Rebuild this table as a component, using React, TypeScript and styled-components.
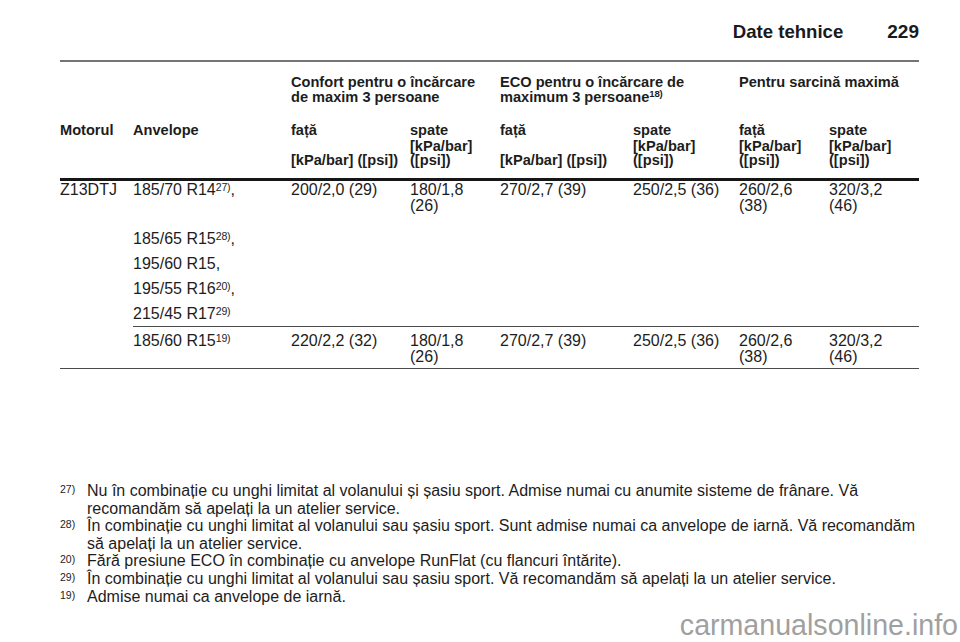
import React from "react";
import styled, { createGlobalStyle } from "styled-components";

const GlobalStyle = createGlobalStyle`
  html, body {
    margin: 0;
    padding: 0;
    background: #ffffff;
  }
  body {
    font-family: "Liberation Sans", Arial, Helvetica, sans-serif;
    color: #1d1d1d;
    width: 960px;
    height: 642px;
    overflow: hidden;
  }
`;

const COLS = "73px 158px 119px 90px 133px 106px 90px 90px";

const Page = styled.div`
  position: relative;
  width: 960px;
  height: 642px;
  padding: 0 41px 0 60px;
  box-sizing: border-box;
`;

const TitleBar = styled.header`
  height: 62px;
  display: flex;
  justify-content: flex-end;
  align-items: center;
  gap: 44px;
  padding-top: 4px;
  box-sizing: border-box;
  border-bottom: 2px solid #747474;
  font-weight: bold;
  font-size: 18.6px;
  color: #1a1a1a;
`;

const PageNo = styled.span`
  font-size: 19px;
`;

const HeadGrid = styled.div`
  display: grid;
  grid-template-columns: ${COLS};
  padding-bottom: 10.5px;
  border-bottom: 3px solid #161616;
  font-weight: bold;
  font-size: 14.6px;
  line-height: 14.5px;
`;

const GroupHead = styled.div<{ $start?: number }>`
  grid-column: ${(p) => (p.$start ? `${p.$start} / span 2` : "span 2")};
  padding-top: 13px;
  white-space: nowrap;
`;

const ColHead = styled.div`
  padding-top: 19px;
  white-space: nowrap;
`;

const UnitHead = styled.div<{ $start?: number }>`
  ${(p) => (p.$start ? `grid-column: ${p.$start};` : "")}
  align-self: end;
  padding-top: 1px;
  white-space: nowrap;
`;

const BodyGrid = styled.div`
  display: grid;
  grid-template-columns: ${COLS};
  border-bottom: 1px solid #4a4a4a;
  font-size: 16px;
  line-height: 15.5px;
`;

type RowKind = "first" | "list" | "last";

const PAD: Record<RowKind, string> = {
  first: "1px 0 13px",
  list: "5px 0 4.5px",
  last: "6px 0 4px",
};

const Cell = styled.div<{ $col?: number; $row: RowKind }>`
  ${(p) => (p.$col ? `grid-column: ${p.$col};` : "")}
  padding: ${(p) => PAD[p.$row]};
  white-space: nowrap;
  border-top: ${(p) => (p.$row === "last" ? "1px solid #4a4a4a" : "none")};
`;

const Sup = styled.sup`
  font-size: 0.66em;
  line-height: 0;
  vertical-align: baseline;
  position: relative;
  top: -0.42em;
  letter-spacing: -0.2px;
`;

const Notes = styled.ol`
  list-style: none;
  margin: 113px 0 0;
  padding: 0;
  font-size: 16px;
  line-height: 17.6px;
`;

const Note = styled.li`
  display: grid;
  grid-template-columns: 27px 1fr;
  white-space: nowrap;
`;

const NoteNo = styled.span`
  font-size: 10.5px;
  line-height: 12px;
  padding-top: 1px;
`;

const Watermark = styled.div`
  position: absolute;
  right: 2px;
  bottom: 2px;
  font-size: 28.6px;
  line-height: 30px;
  color: #a0a0a0;
  pointer-events: none;
`;

const values1 = [
  <>200/2,0 (29)</>,
  <>180/1,8<br />(26)</>,
  <>270/2,7 (39)</>,
  <>250/2,5 (36)</>,
  <>260/2,6<br />(38)</>,
  <>320/3,2<br />(46)</>,
];

const values2 = [
  <>220/2,2 (32)</>,
  <>180/1,8<br />(26)</>,
  <>270/2,7 (39)</>,
  <>250/2,5 (36)</>,
  <>260/2,6<br />(38)</>,
  <>320/3,2<br />(46)</>,
];

const notes: { no: string; text: React.ReactNode }[] = [
  {
    no: "27)",
    text: (
      <>
        Nu în combinație cu unghi limitat al volanului și șasiu sport. Admise numai cu anumite sisteme de frânare. Vă
        <br />
        recomandăm să apelați la un atelier service.
      </>
    ),
  },
  {
    no: "28)",
    text: (
      <>
        În combinație cu unghi limitat al volanului sau șasiu sport. Sunt admise numai ca anvelope de iarnă. Vă recomandăm
        <br />
        să apelați la un atelier service.
      </>
    ),
  },
  { no: "20)", text: <>Fără presiune ECO în combinație cu anvelope RunFlat (cu flancuri întărite).</> },
  {
    no: "29)",
    text: <>În combinație cu unghi limitat al volanului sau șasiu sport. Vă recomandăm să apelați la un atelier service.</>,
  },
  { no: "19)", text: <>Admise numai ca anvelope de iarnă.</> },
];

const twoLineUnit = (
  <>
    [kPa/bar]
    <br />
    ([psi])
  </>
);

export default function App() {
  return (
    <>
      <GlobalStyle />
      <Page>
        <TitleBar>
          <span>Date tehnice</span>
          <PageNo>229</PageNo>
        </TitleBar>

        <HeadGrid>
          <GroupHead $start={3}>
            Confort pentru o încărcare
            <br />
            de maxim 3 persoane
          </GroupHead>
          <GroupHead>
            ECO pentru o încărcare de
            <br />
            maximum 3 persoane<Sup>18)</Sup>
          </GroupHead>
          <GroupHead>Pentru sarcină maximă</GroupHead>

          <ColHead>Motorul</ColHead>
          <ColHead>Anvelope</ColHead>
          <ColHead>față</ColHead>
          <ColHead>spate</ColHead>
          <ColHead>față</ColHead>
          <ColHead>spate</ColHead>
          <ColHead>față</ColHead>
          <ColHead>spate</ColHead>

          <UnitHead $start={3}>[kPa/bar] ([psi])</UnitHead>
          <UnitHead>{twoLineUnit}</UnitHead>
          <UnitHead>[kPa/bar] ([psi])</UnitHead>
          <UnitHead>{twoLineUnit}</UnitHead>
          <UnitHead>{twoLineUnit}</UnitHead>
          <UnitHead>{twoLineUnit}</UnitHead>
        </HeadGrid>

        <BodyGrid>
          <Cell $row="first">Z13DTJ</Cell>
          <Cell $row="first">
            185/70 R14<Sup>27)</Sup>,
          </Cell>
          {values1.map((v, i) => (
            <Cell key={`a${i}`} $row="first">
              {v}
            </Cell>
          ))}
          <Cell $col={2} $row="list">
            185/65 R15<Sup>28)</Sup>,
          </Cell>
          <Cell $col={2} $row="list">
            195/60 R15,
          </Cell>
          <Cell $col={2} $row="list">
            195/55 R16<Sup>20)</Sup>,
          </Cell>
          <Cell $col={2} $row="list">
            215/45 R17<Sup>29)</Sup>
          </Cell>
          <Cell $col={2} $row="last">
            185/60 R15<Sup>19)</Sup>
          </Cell>
          {values2.map((v, i) => (
            <Cell key={`b${i}`} $row="last">
              {v}
            </Cell>
          ))}
        </BodyGrid>

        <Notes>
          {notes.map((n) => (
            <Note key={n.no}>
              <NoteNo>{n.no}</NoteNo>
              <span>{n.text}</span>
            </Note>
          ))}
        </Notes>

        <Watermark>carmanualsonline.info</Watermark>
      </Page>
    </>
  );
}
